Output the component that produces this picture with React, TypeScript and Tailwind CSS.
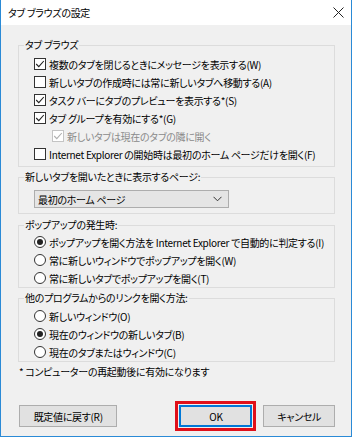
import React from "react";

const FONT = "font-['Noto_Sans_CJK_JP',sans-serif]";

function Check({ checked, disabled }: { checked?: boolean; disabled?: boolean }) {
  return (
    <span
      className={`w-[12px] h-[12px] border bg-white flex items-center justify-center shrink-0 ${
        disabled ? "border-[#c4c4c4]" : "border-[#333333]"
      }`}
    >
      {checked && (
        <svg width="10" height="10" viewBox="0 0 10 10">
          <path
            d="M1.2 5 L3.8 7.6 L8.8 2"
            fill="none"
            stroke={disabled ? "#b0b0b0" : "#222222"}
            strokeWidth="1.1"
          />
        </svg>
      )}
    </span>
  );
}

function Radio({ checked }: { checked?: boolean }) {
  return (
    <span className="w-[12px] h-[12px] rounded-full border border-[#333333] bg-white flex items-center justify-center shrink-0">
      {checked && <span className="w-[6px] h-[6px] rounded-full bg-[#222222]" />}
    </span>
  );
}

function CheckRow({
  label,
  checked,
  disabled,
  indent,
}: {
  label: string;
  checked?: boolean;
  disabled?: boolean;
  indent?: boolean;
}) {
  return (
    <div className={`flex items-center h-[18px] gap-[3px] ${indent ? "pl-[18px]" : ""}`}>
      <Check checked={checked} disabled={disabled} />
      <span className={`whitespace-nowrap ${disabled ? "text-[#8a8a8a]" : "text-black"}`}>{label}</span>
    </div>
  );
}

function RadioRow({ label, checked }: { label: string; checked?: boolean }) {
  return (
    <div className="flex items-center h-[18px] gap-[3px]">
      <Radio checked={checked} />
      <span className="whitespace-nowrap text-black">{label}</span>
    </div>
  );
}

function Group({
  title,
  children,
  className = "",
}: {
  title: string;
  children: React.ReactNode;
  className?: string;
}) {
  return (
    <fieldset className={`border border-[#dcdcdc] ${className}`}>
      <legend className="ml-[5px] px-[1px] leading-[14px] text-black">{title}</legend>
      {children}
    </fieldset>
  );
}

export default function App() {
  return (
    <div
      className={`${FONT} w-[352px] h-[437px] bg-[#f0f0f0] border-x border-b border-[#2a8ad6] flex flex-col text-[10px] tracking-[-0.3px] [font-feature-settings:'palt'] text-black`}
    >
      {/* title bar */}
      <div className="h-[25px] bg-white flex items-center justify-between pl-[7px] pr-[6px] shrink-0">
        <span className="text-[10px] leading-[14px]">タブ ブラウズの設定</span>
        <svg width="11" height="11" viewBox="0 0 11 11" className="mr-[1px]">
          <path d="M0.5 0.5 L10.5 10.5 M10.5 0.5 L0.5 10.5" stroke="#222" strokeWidth="1" />
        </svg>
      </div>

      <div className="flex flex-col pl-[17px] pr-[16px] pt-[13px]">
        <Group title="タブ ブラウズ">
          <div className="pl-[15px] pt-[3px] pb-[3px]">
            <CheckRow checked label="複数のタブを閉じるときにメッセージを表示する(W)" />
            <CheckRow label="新しいタブの作成時には常に新しいタブへ移動する(A)" />
            <CheckRow checked label="タスク バーにタブのプレビューを表示する*(S)" />
            <CheckRow checked label="タブ グループを有効にする*(G)" />
            <CheckRow checked disabled indent label="新しいタブは現在のタブの隣に開く" />
            <CheckRow label="Internet Explorer の開始時は最初のホーム ページだけを開く(F)" />
          </div>
        </Group>

        <Group title="新しいタブを開いたときに表示するページ:" className="mt-[3px]">
          <div className="pl-[15px] pt-[6px] pb-[5px]">
            <div className="w-[195px] h-[18px] bg-[#e5e5e5] border border-[#adadad] flex items-center justify-between pl-[3px] pr-[6px]">
              <span className="whitespace-nowrap">最初のホーム ページ</span>
              <svg width="9" height="6" viewBox="0 0 9 6">
                <path d="M0.5 0.8 L4.5 4.8 L8.5 0.8" fill="none" stroke="#333" strokeWidth="1" />
              </svg>
            </div>
          </div>
        </Group>

        <Group title="ポップアップの発生時:" className="mt-[4px]">
          <div className="pl-[15px] pt-[1px]">
            <RadioRow checked label="ポップアップを開く方法を Internet Explorer で自動的に判定する(I)" />
            <RadioRow label="常に新しいウィンドウでポップアップを開く(W)" />
            <RadioRow label="常に新しいタブでポップアップを開く(T)" />
          </div>
        </Group>

        <Group title="他のプログラムからのリンクを開く方法:" className="mt-[3px]">
          <div className="pl-[15px] pt-[2px]">
            <RadioRow label="新しいウィンドウ(O)" />
            <RadioRow checked label="現在のウィンドウの新しいタブ(B)" />
            <RadioRow label="現在のタブまたはウィンドウ(C)" />
          </div>
        </Group>

        <div className="mt-[3px] leading-[14px] pl-[1px] whitespace-nowrap">
          * コンピューターの再起動後に有効になります
        </div>

        <div className="mt-[22px] flex items-start pl-[1px]">
          <div className="mt-[4px] w-[99px] h-[22px] bg-[#e1e1e1] border border-[#adadad] flex items-center justify-center">
            既定値に戻す(R)
          </div>
          <div className="ml-[58px] border-[3px] border-[#e0101a] p-[1px]">
            <div className="w-[73px] h-[22px] bg-[#e1e1e1] border-2 border-[#0078d7] flex items-center justify-center">
              OK
            </div>
          </div>
          <div className="ml-[7px] mt-[4px] w-[72px] h-[22px] bg-[#e1e1e1] border border-[#adadad] flex items-center justify-center">
            キャンセル
          </div>
        </div>
      </div>
    </div>
  );
}
